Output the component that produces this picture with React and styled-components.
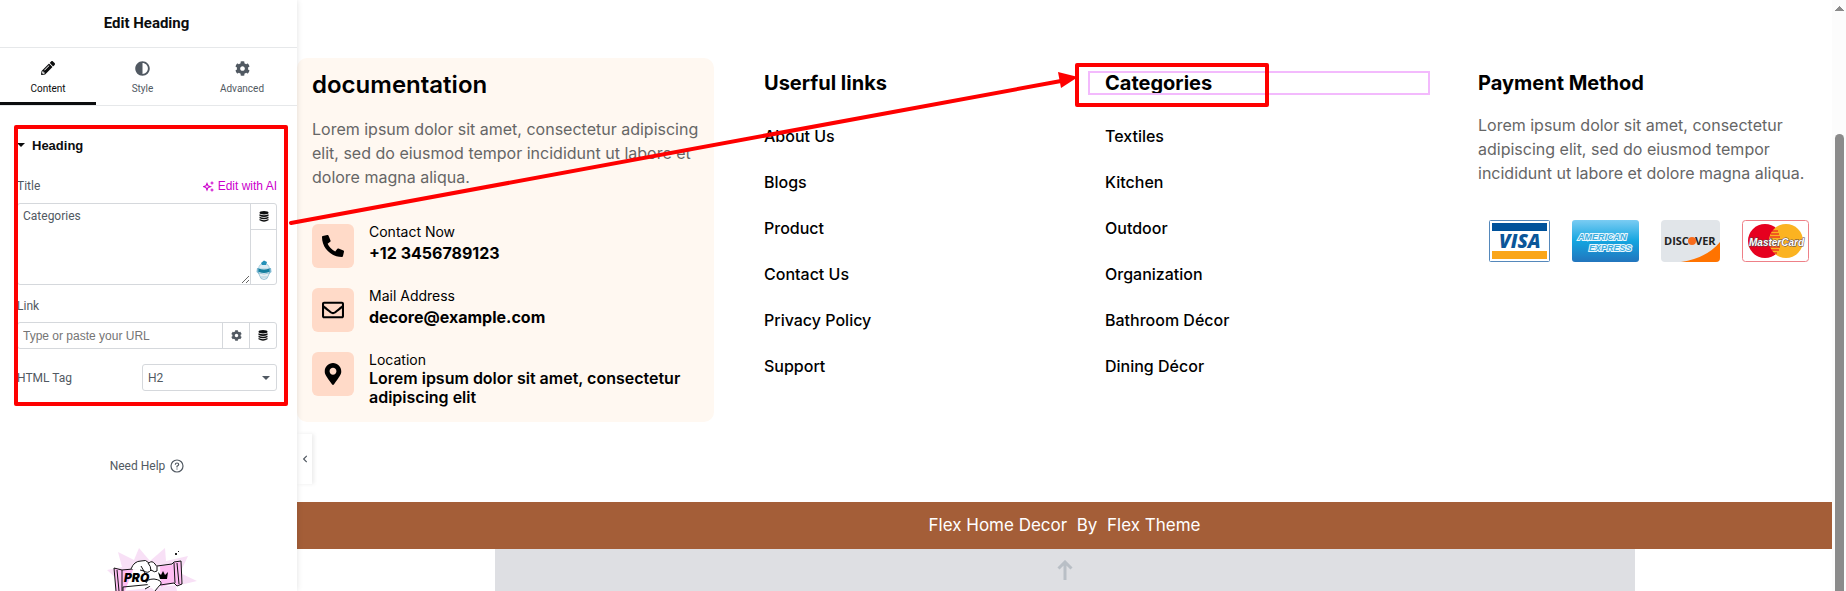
import styled, { createGlobalStyle } from "styled-components";
import {
  FaPencilAlt,
  FaAdjust,
  FaCog,
  FaPhoneAlt,
  FaRegEnvelope,
  FaMapMarkerAlt,
  FaChevronLeft,
} from "react-icons/fa";

const usefulLinks = [
  "About Us",
  "Blogs",
  "Product",
  "Contact Us",
  "Privacy Policy",
  "Support",
];

const categories = [
  "Textiles",
  "Kitchen",
  "Outdoor",
  "Organization",
  "Bathroom Décor",
  "Dining Décor",
];

export default function App() {
  return (
    <Page>
      <GlobalStyle />
      <EditorPanel />
      <Preview />
      <Scrollbar>
        <ScrollArrow viewBox="0 0 9 5">
          <path d="M0 5V4H1V3H2V2H3V1H4V0H5V1H6V2H7V3H8V4H9V5Z" fill="#8b8b8b" />
        </ScrollArrow>
        <ScrollThumb />
      </Scrollbar>
      <ArrowMark viewBox="0 0 790 160">
        <path d="M2 155L772 13" stroke="#fe0000" strokeWidth="4" strokeLinecap="round" />
        <path d="M769 4L789 9L772 20Z" fill="#fe0000" />
      </ArrowMark>
    </Page>
  );
}

function EditorPanel() {
  return (
    <Sidebar>
      <PanelTitle>Edit Heading</PanelTitle>
      <Tabs>
        <Tab type="button" $active>
          <FaPencilAlt size={14} />
          Content
        </Tab>
        <Tab type="button">
          <FaAdjust size={15} />
          Style
        </Tab>
        <Tab type="button">
          <FaCog size={15} />
          Advanced
        </Tab>
      </Tabs>
      <Controls>
        <SectionToggle type="button">
          <Caret />
          Heading
        </SectionToggle>
        <LabelRow>
          <label htmlFor="title">Title</label>
          <AiButton type="button">
            <SparkIcon />
            Edit with AI
          </AiButton>
        </LabelRow>
        <TitleField>
          <TitleInput id="title" defaultValue="Categories" />
          <FieldSide>
            <SideButton type="button" aria-label="Dynamic tags">
              <StackIcon />
            </SideButton>
            <RobotIcon />
          </FieldSide>
        </TitleField>
        <LinkLabel htmlFor="link">Link</LinkLabel>
        <LinkField>
          <LinkInput id="link" type="text" placeholder="Type or paste your URL" />
          <LinkButton type="button" aria-label="Link options">
            <FaCog size={11} />
          </LinkButton>
          <LinkButton type="button" aria-label="Dynamic tags">
            <StackIcon />
          </LinkButton>
        </LinkField>
        <TagRow>
          <label htmlFor="tag">HTML Tag</label>
          <SelectWrap>
            <TagSelect id="tag" defaultValue="H2">
              <option>H1</option>
              <option>H2</option>
              <option>H3</option>
            </TagSelect>
            <Caret />
          </SelectWrap>
        </TagRow>
        <PanelMark />
      </Controls>
      <HelpLink href="#help">
        Need Help
        <HelpIcon />
      </HelpLink>
      <PromoArt />
    </Sidebar>
  );
}

function Preview() {
  return (
    <Canvas>
      <CollapseButton type="button" aria-label="Hide panel">
        <FaChevronLeft size={8} />
      </CollapseButton>
      <FooterGrid>
        <AboutCard>
          <AboutTitle>documentation</AboutTitle>
          <Paragraph>
            Lorem ipsum dolor sit amet, consectetur adipiscing elit, sed do
            eiusmod tempor incididunt ut labore et dolore magna aliqua.
          </Paragraph>
          <ContactList>
            <ContactItem>
              <ContactIcon>
                <FaPhoneAlt size={22} />
              </ContactIcon>
              <ContactText $gap={4} $weight={700}>
                <span>Contact Now</span>
                <strong>+12 3456789123</strong>
              </ContactText>
            </ContactItem>
            <ContactItem>
              <ContactIcon>
                <FaRegEnvelope size={22} />
              </ContactIcon>
              <ContactText $gap={4} $weight={700}>
                <span>Mail Address</span>
                <strong>decore@example.com</strong>
              </ContactText>
            </ContactItem>
            <ContactItem>
              <ContactIcon>
                <FaMapMarkerAlt size={22} />
              </ContactIcon>
              <ContactText $gap={1} $weight={600}>
                <span>Location</span>
                <strong>Lorem ipsum dolor sit amet, consectetur adipiscing elit</strong>
              </ContactText>
            </ContactItem>
          </ContactList>
        </AboutCard>
        <Column $left={50}>
          <ColumnTitle>Userful links</ColumnTitle>
          <Links items={usefulLinks} />
        </Column>
        <Column $left={17}>
          <SelectedTitle>
            Categories
            <TitleMark />
          </SelectedTitle>
          <Links items={categories} />
        </Column>
        <Column $left={48}>
          <ColumnTitle>Payment Method</ColumnTitle>
          <Paragraph>
            Lorem ipsum dolor sit amet, consectetur adipiscing elit, sed do
            eiusmod tempor incididunt ut labore et dolore magna aliqua.
          </Paragraph>
          <PaymentCards>
            <VisaCard />
            <AmexCard />
            <DiscoverCard />
            <MasterCard />
          </PaymentCards>
        </Column>
      </FooterGrid>
      <Copyright>{"Flex Home Decor\u00a0 By\u00a0 Flex Theme"}</Copyright>
      <ScrollTop href="#top" aria-label="Back to top">
        <svg width="16" height="21" viewBox="0 0 16 21" fill="none" stroke="#b9bfc6">
          <path d="M8 20V3M1.500 8.500L8 2L14.500 8.500" strokeWidth="3" />
        </svg>
      </ScrollTop>
    </Canvas>
  );
}

function Links({ items }) {
  return (
    <LinkList>
      {items.map((item) => (
        <li key={item}>
          <FooterLink href="#">{item}</FooterLink>
        </li>
      ))}
    </LinkList>
  );
}

function SparkIcon() {
  return (
    <svg width="11" height="11" viewBox="0 0 11 11" fill="none" stroke="currentColor">
      <path d="M4 2.500L5 4.800L7.500 5.700L5 6.600L4 9L3 6.600L.500 5.700L3 4.800Z" strokeWidth="1.100" />
      <path d="M9 .5V3.500M7.500 2H10.500M9 7.500V10.500M7.500 9H10.500" />
    </svg>
  );
}

function StackIcon() {
  return (
    <svg width="10" height="11" viewBox="0 0 10 11" fill="#0c0d0e">
      <ellipse cx="5" cy="1.800" rx="4.500" ry="1.700" />
      <path d="M.5 3.200Q5 5.500 9.500 3.200V5Q5 7 .5 5Z" />
      <path d="M.5 5.700Q5 8 9.500 5.700V7.300Q5 9.300 .5 7.300Z" />
      <path d="M.5 8Q5 10.300 9.500 8V9.300Q5 12 .5 9.300Z" />
    </svg>
  );
}

function RobotIcon() {
  return (
    <svg width="16" height="20" viewBox="0 0 16 20">
      <path d="M2.500 9Q3 3.500 8 3.500T13.500 9Z" fill="#dcecf3" stroke="#8fc0d4" strokeWidth=".7" />
      <path d="M5 3L8 .5L11 2L10 5H6Z" fill="#2491b8" />
      <path d="M1 8H3V14L.5 12ZM15 8H13V14L15.500 12Z" fill="#7fb9d2" />
      <path d="M2.500 8.500Q8 10.500 13.500 8.500V12Q8 14 2.500 12Z" fill="#147f9f" />
      <path d="M2.500 13Q8 15 13.500 13L11 18.500Q8 20.500 5 18.500Z" fill="#e6eff3" stroke="#75afc8" strokeWidth=".7" />
      <path d="M5.500 17H10.500" stroke="#6daac5" strokeDasharray="1 1" />
    </svg>
  );
}

function HelpIcon() {
  return (
    <svg width="14" height="14" viewBox="0 0 14 14" fill="none" stroke="currentColor">
      <circle cx="7" cy="7" r="6" strokeWidth="1.200" />
      <path d="M5.300 5.700Q5.300 4 7 4T8.700 5.600Q8.700 6.600 7 7.200V8.400M7 9.400V10.600" strokeWidth="1.200" />
    </svg>
  );
}

function PromoArt() {
  return (
    <PromoSvg width="100" height="43" viewBox="-8 0 100 43">
      <path
        d="M0 22L15 19L11 4L27 12L32 0L43 13L58 0L59 13L81 8L73 25L90 33L69 38L70 43H8L10 31Z"
        fill="#f8e0f6"
      />
      <path d="M8 24L70 17V37L14 43H9Z" fill="#fff" />
      <path d="M7 20L15 22L17 21L26 22L18 43H9ZM53 18L66 17L67 14L74 14L75 36L70 38L68 35L54 39Z" fill="#ffbdf3" />
      <g fill="none" stroke="#111" strokeWidth="1">
        <path d="M7 20L15 22V43M7 20L9 43M10 22L12 43M15 22L26 21M50 18L65 16M65 16L67 14L74 13L75 36L70 38L67 35L53 37M67 15L68 35M70 15L72 36" />
        <path d="M16 43V39L47 36M38 41L47 36" />
        <path
          d="M24 21Q27 13 34 13Q39 11 42 15Q45 12 48 16Q51 18 50 23Q48 25 44 22Q41 26 37 23L33 22M34 18L38 25M41 15Q44 18 44 23"
          fill="#fff"
        />
        <path d="M39 35Q40 31 47 31Q55 32 54 36Q51 39 48 43" fill="#fff" />
      </g>
      <PromoText x="17" y="34">PRO</PromoText>
      <path d="M51 24L54 27L56 23L58 27L61 24L60 31H53Z" fill="#000" />
      <path d="M68 5H70V7H68ZM71 3H72V4H71Z" fill="#222" />
    </PromoSvg>
  );
}

function VisaCard() {
  return (
    <svg width="61" height="42" viewBox="0 0 61 42" role="img" aria-label="Visa">
      <rect x=".5" y=".5" width="60" height="41" rx="1" fill="#fff" stroke="#5588bb" />
      <rect x="3" y="3" width="55" height="8" fill="#00529b" />
      <rect x="3" y="31" width="55" height="8" fill="#faa61a" />
      <VisaText x="10" y="28">VISA</VisaText>
    </svg>
  );
}

function AmexCard() {
  return (
    <svg width="67" height="42" viewBox="0 0 67 42" role="img" aria-label="American Express">
      <defs>
        <linearGradient id="amex" x1="0" y1="0" x2="0" y2="1">
          <stop offset="0" stopColor="#7accf3" />
          <stop offset=".5" stopColor="#14a5e0" />
          <stop offset="1" stopColor="#2275bd" />
        </linearGradient>
      </defs>
      <rect width="67" height="42" rx="3" fill="url(#amex)" />
      <AmexText x="6" y="20">AMERICAN</AmexText>
      <AmexText x="17" y="31">EXPRESS</AmexText>
    </svg>
  );
}

function DiscoverCard() {
  return (
    <svg width="59" height="42" viewBox="0 0 59 42" role="img" aria-label="Discover">
      <rect width="59" height="42" rx="4" fill="#e1e5e9" />
      <path d="M20 42Q46 38 59 22V38Q59 42 55 42Z" fill="#ff7300" />
      <DiscoverText x="3" y="25">DISC</DiscoverText>
      <circle cx="31" cy="21" r="4" fill="#f76b1c" />
      <DiscoverText x="34" y="25">VER</DiscoverText>
    </svg>
  );
}

function MasterCard() {
  return (
    <svg width="67" height="42" viewBox="0 0 67 42" role="img" aria-label="MasterCard">
      <rect x=".5" y=".5" width="66" height="41" rx="3" fill="#fff" stroke="#ee8087" />
      <circle cx="23" cy="21" r="17" fill="#e6001f" />
      <circle cx="44" cy="21" r="17" fill="#fbb321" />
      <path d="M30 11H36M29 14H37M28 17H38M28 27H38M29 30H37M30 33H35" stroke="#e6001f" />
      <MasterText x="7" y="26">MasterCard</MasterText>
    </svg>
  );
}

const GlobalStyle = createGlobalStyle`
  * {
    box-sizing: border-box;
  }

  body {
    margin: 0;
    background: #fff;
  }

  button,
  input,
  textarea,
  select {
    font-family: inherit;
    color: inherit;
  }
`;

const Page = styled.div`
  position: relative;
  display: flex;
  height: 100vh;
  overflow: hidden;
  font-family: "Inter", sans-serif;
  color: #000;
`;

const Sidebar = styled.aside`
  position: relative;
  z-index: 1;
  width: 297px;
  flex-shrink: 0;
  display: flex;
  flex-direction: column;
  background: #fff;
  box-shadow: 0 0 6px rgba(0, 0, 0, 0.12);
  font-family: "Roboto", sans-serif;
  font-size: 12px;
  color: #515962;
`;

const PanelTitle = styled.h1`
  margin: 0;
  height: 48px;
  padding-right: 4px;
  border-bottom: 1px solid #e6e8ea;
  font-size: 15px;
  font-weight: 700;
  line-height: 46px;
  text-align: center;
  color: #0c0d0e;
`;

const Tabs = styled.div`
  display: grid;
  grid-template-columns: 96px 93px 1fr;
  height: 58px;
  padding-right: 2px;
  border-bottom: 1px solid #e6e8ea;
`;

const Tab = styled.button`
  display: flex;
  flex-direction: column;
  align-items: center;
  justify-content: space-between;
  height: 57px;
  padding: 13px 0 6px;
  border: none;
  border-bottom: 3px solid
    ${(props) => (props.$active ? "#0c0d0e" : "transparent")};
  background: none;
  font-size: 10px;
  line-height: 14px;
  color: ${(props) => (props.$active ? "#0c0d0e" : "#515962")};
`;

const Controls = styled.section`
  position: relative;
  padding: 27px 20px 15px 17px;
`;

const Caret = styled.span`
  width: 0;
  border: 4px solid transparent;
  border-top-color: currentColor;
  border-bottom: none;
`;

const SectionToggle = styled.button`
  display: flex;
  align-items: center;
  gap: 7px;
  height: 24px;
  padding: 0;
  border: none;
  background: none;
  font-family: "Liberation Sans", sans-serif;
  font-size: 13px;
  font-weight: 700;
  color: #0c0d0e;
`;

const LabelRow = styled.div`
  display: flex;
  align-items: center;
  justify-content: space-between;
  height: 16px;
  margin: 21px 0 9px;
`;

const AiButton = styled.button`
  display: flex;
  align-items: center;
  gap: 4px;
  padding: 0;
  border: none;
  background: none;
  font-family: "Liberation Sans", sans-serif;
  font-size: 12px;
  color: #cc00cc;
`;

const TitleField = styled.div`
  display: flex;
  height: 82px;
  border: 1px solid #d5d8dc;
  border-radius: 3px;
`;

const TitleInput = styled.textarea`
  flex: 1;
  min-width: 0;
  padding: 5px;
  border: none;
  outline: none;
  background: none;
  font-size: 12px;
  line-height: 14px;
`;

const FieldSide = styled.div`
  display: flex;
  flex-direction: column;
  align-items: center;
  justify-content: space-between;
  width: 26px;
  padding-bottom: 4px;
  border-left: 1px solid #d5d8dc;
`;

const SideButton = styled.button`
  display: flex;
  align-items: center;
  justify-content: center;
  width: 25px;
  height: 26px;
  padding: 0;
  border: none;
  border-bottom: 1px solid #d5d8dc;
  background: none;
`;

const LinkLabel = styled.label`
  display: block;
  margin: 13px 0 8px;
  line-height: 16px;
`;

const LinkField = styled.div`
  display: flex;
  height: 27px;
  border: 1px solid #d5d8dc;
  border-radius: 3px;
`;

const LinkInput = styled.input`
  flex: 1;
  min-width: 0;
  padding: 0 5px;
  border: none;
  outline: none;
  background: none;
  font-size: 12px;

  &::placeholder {
    font-family: "Liberation Sans", sans-serif;
    color: #757575;
    opacity: 1;
  }
`;

const LinkButton = styled.button`
  display: flex;
  align-items: center;
  justify-content: center;
  width: 27px;
  padding: 0;
  border: none;
  border-left: 1px solid #d5d8dc;
  background: none;
`;

const TagRow = styled.div`
  display: flex;
  align-items: center;
  justify-content: space-between;
  margin-top: 15px;
`;

const SelectWrap = styled.div`
  display: flex;
  align-items: center;
  width: 135px;
  height: 27px;
  padding-right: 6px;
  border: 1px solid #d5d8dc;
  border-radius: 3px;
`;

const TagSelect = styled.select`
  appearance: none;
  flex: 1;
  height: 25px;
  padding: 0 5px;
  border: none;
  outline: none;
  background: none;
  font-size: 12px;
`;

const Mark = styled.div`
  position: absolute;
  border: 4px solid #fe0000;
  border-radius: 2px;
  pointer-events: none;
`;

const PanelMark = styled(Mark)`
  inset: 19px 9px 0 14px;
`;

const HelpLink = styled.a`
  display: flex;
  align-items: center;
  align-self: center;
  gap: 5px;
  margin-top: 53px;
  padding-right: 3px;
  font-size: 12px;
  font-weight: 400;
  line-height: 14px;
  color: #515962;
  text-decoration: none;
`;

const PromoSvg = styled.svg`
  align-self: center;
  flex-shrink: 0;
  margin-top: 75px;
`;

const PromoText = styled.text`
  font: italic 900 12px "Inter", sans-serif;
`;

const Canvas = styled.main`
  position: relative;
  flex: 1;
  min-width: 0;
  display: flex;
  flex-direction: column;
`;

const CollapseButton = styled.button`
  position: absolute;
  top: 434px;
  left: 0;
  display: flex;
  align-items: center;
  justify-content: center;
  width: 15px;
  height: 50px;
  padding: 0;
  border: none;
  background: #fff;
  box-shadow: 2px 0 4px rgba(0, 0, 0, 0.08);
  color: #515962;
`;

const FooterGrid = styled.div`
  display: grid;
  grid-template-columns:
    minmax(0, 417fr) minmax(0, 374fr) minmax(0, 342fr)
    minmax(0, 402fr);
  align-items: start;
  padding: 58px 0 80px;
`;

const AboutCard = styled.section`
  padding: 12px 15px 15px;
  border-radius: 10px;
  background: #fff8f1;
`;

const AboutTitle = styled.h2`
  margin: 0;
  font-size: 24px;
  font-weight: 600;
  line-height: 29px;
`;

const Paragraph = styled.p`
  margin: 18px 0 35px;
  font-size: 16px;
  font-weight: 400;
  line-height: 24px;
  color: #666;
`;

const ContactList = styled.ul`
  display: flex;
  flex-direction: column;
  gap: 20px;
  margin: 0;
  padding: 0;
  list-style: none;
`;

const ContactItem = styled.li`
  display: flex;
  align-items: flex-start;
  gap: 15px;
`;

const ContactIcon = styled.span`
  display: flex;
  align-items: center;
  justify-content: center;
  flex-shrink: 0;
  width: 42px;
  height: 44px;
  border-radius: 6px;
  background: #ffdac8;
`;

const ContactText = styled.div`
  display: flex;
  flex-direction: column;
  gap: ${(props) => props.$gap}px;
  font-size: 14px;
  line-height: 16px;

  strong {
    font-size: 16px;
    font-weight: ${(props) => props.$weight};
    line-height: 19px;
  }
`;

const Column = styled.section`
  padding: 13px 20px 0 ${(props) => props.$left}px;
`;

const ColumnTitle = styled.h2`
  position: relative;
  margin: 0;
  font-size: 20px;
  font-weight: 700;
  line-height: 24px;
`;

const SelectedTitle = styled(ColumnTitle)`
  margin: 0 -20px 0 -17px;
  padding-left: 17px;
  outline: 2px solid #f3bafd;
  outline-offset: -2px;
`;

const TitleMark = styled(Mark)`
  top: -8px;
  left: -13px;
  width: 194px;
  height: 44px;
`;

const LinkList = styled.ul`
  display: flex;
  flex-direction: column;
  gap: 22px;
  margin: 29px 0 0;
  padding: 0;
  list-style: none;
  font-size: 16px;
  line-height: 24px;
`;

const FooterLink = styled.a`
  font-weight: 500;
  color: #000;
  text-decoration: none;
`;

const PaymentCards = styled.div`
  display: flex;
  gap: 22px;
  padding-left: 11px;

  svg {
    flex-shrink: 0;
  }
`;

const VisaText = styled.text`
  font: italic 800 19px "Open Sans", sans-serif;
  fill: #0a5699;
`;

const AmexText = styled.text`
  font: italic 700 9px "Liberation Sans", sans-serif;
  fill: #3bacdf;
  stroke: #e9f7fd;
  stroke-width: 2px;
  paint-order: stroke;
`;

const DiscoverText = styled.text`
  font: 700 11px "Open Sans", sans-serif;
  fill: #222;
`;

const MasterText = styled.text`
  font: italic 700 10px "Liberation Sans", sans-serif;
  fill: #fff;
  stroke: #55434a;
  stroke-width: 1px;
  paint-order: stroke;
`;

const Copyright = styled.footer`
  height: 47px;
  flex-shrink: 0;
  background: #a45e38;
  font-family: "Inter", sans-serif;
  font-size: 17px;
  line-height: 47px;
  text-align: center;
  color: #fff;
`;

const ScrollTop = styled.a`
  display: flex;
  justify-content: center;
  flex: 1;
  width: 100%;
  max-width: 1140px;
  margin: 0 auto;
  padding-top: 11px;
  background: #dedfe3;
`;

const Scrollbar = styled.div`
  display: flex;
  flex-direction: column;
  align-items: center;
  flex-shrink: 0;
  width: 14px;
  padding-top: 6px;
  background: #fcfcfc;
`;

const ScrollArrow = styled.svg`
  width: 9px;
  height: 5px;
`;

const ScrollThumb = styled.div`
  flex: 1;
  width: 9px;
  margin-top: 123px;
  border-radius: 5px 5px 0 0;
  background: #8b8b8b;
`;

const ArrowMark = styled.svg`
  position: absolute;
  z-index: 2;
  top: 68px;
  left: 289px;
  width: 790px;
  height: 160px;
  fill: none;
  pointer-events: none;
`;
